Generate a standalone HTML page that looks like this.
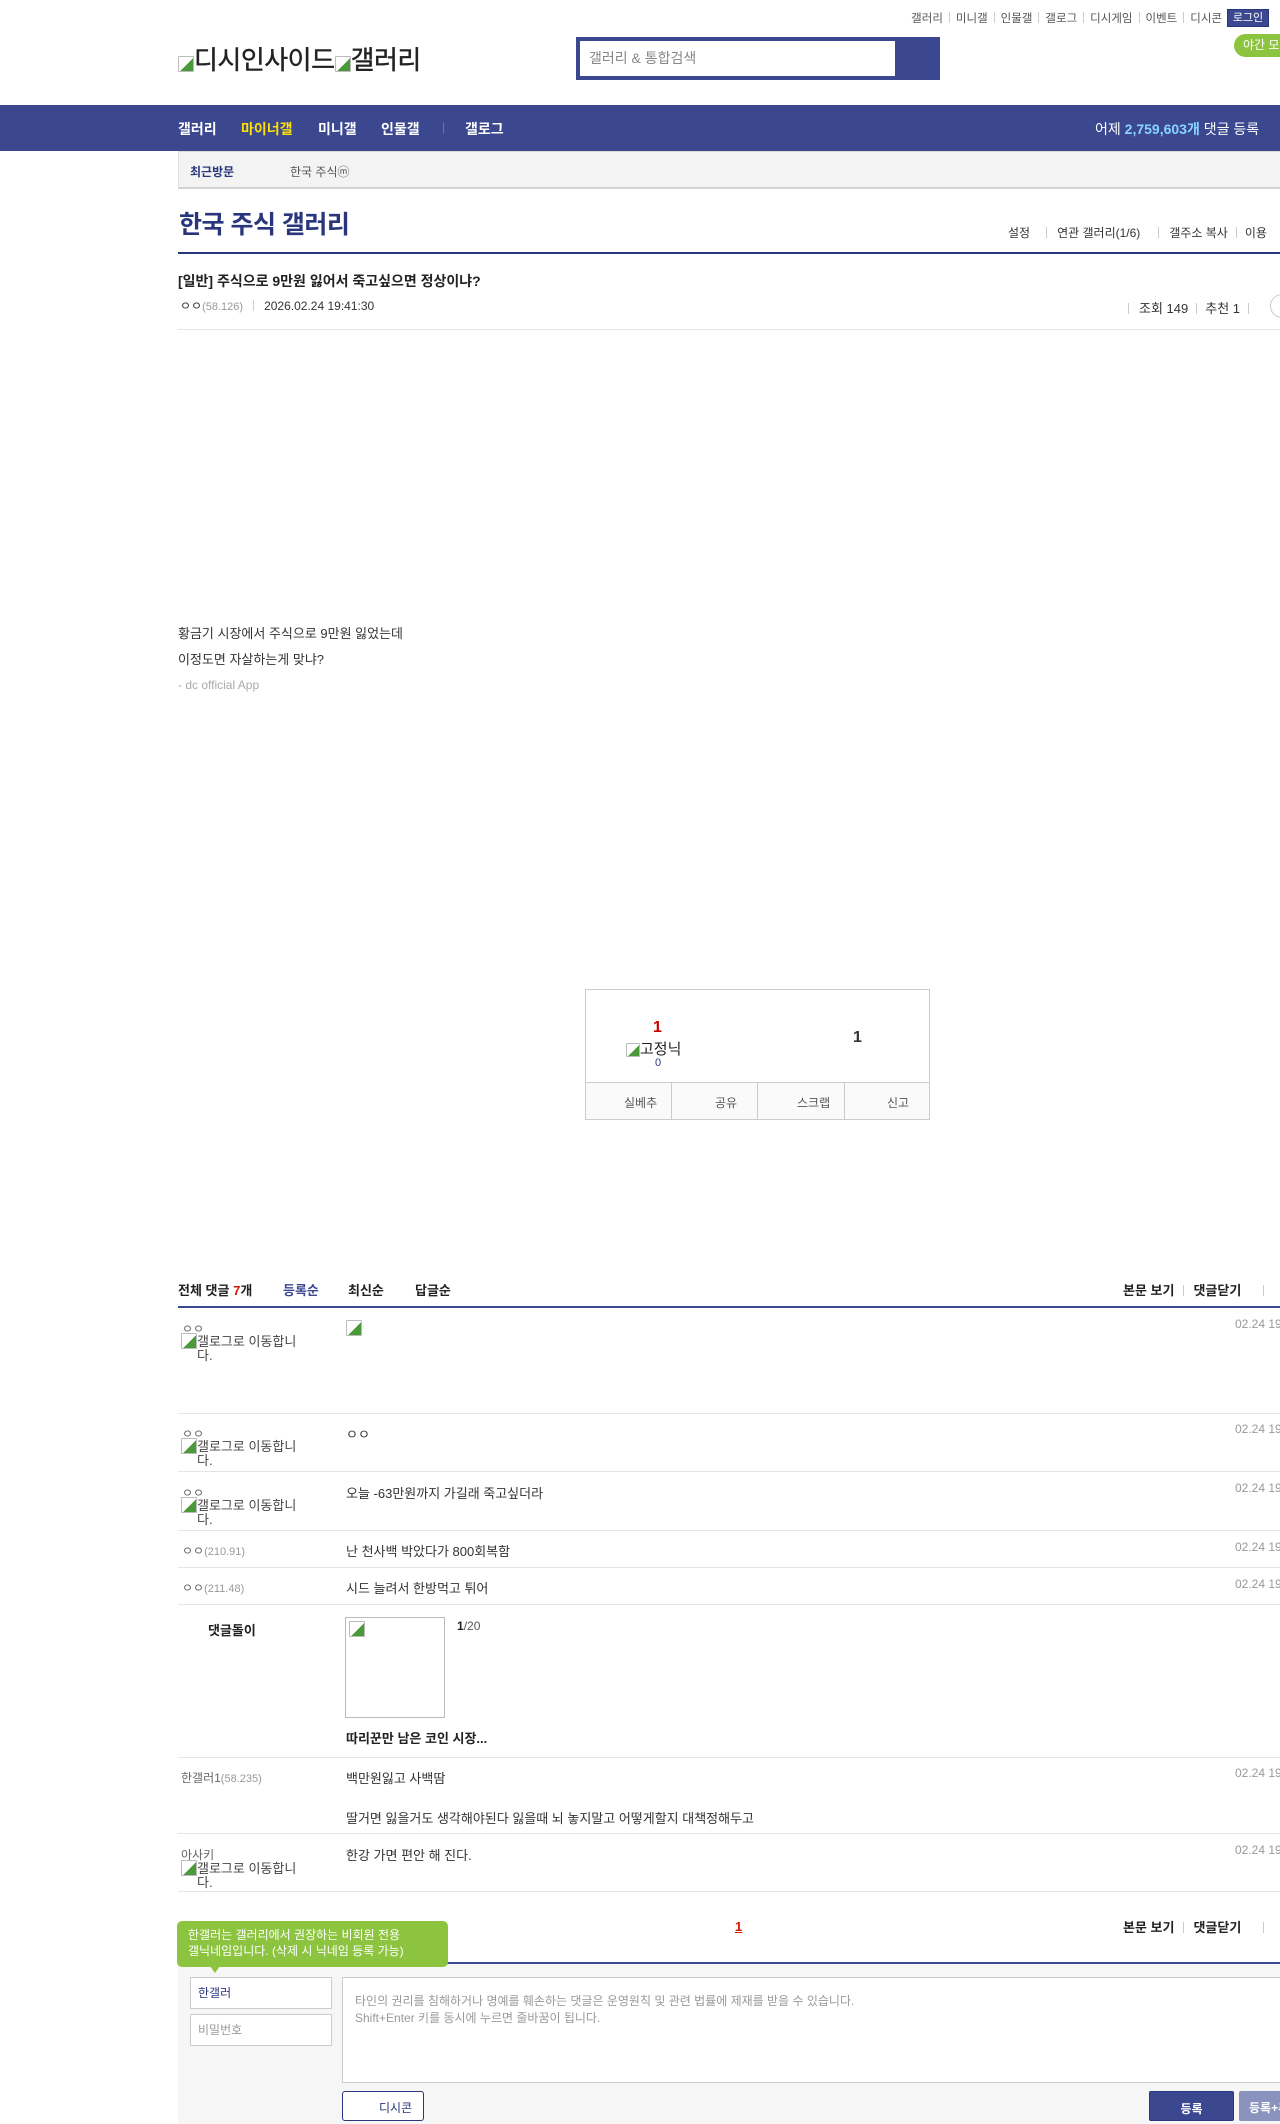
<!DOCTYPE html>
<html><head><meta charset="utf-8">
<style>
*{margin:0;padding:0;box-sizing:border-box}
body{width:1280px;height:2113px;overflow:hidden;background:#fff;font-family:"Liberation Sans","Noto Sans CJK KR",sans-serif;color:#333;font-size:13px;position:relative}
.a{position:absolute;white-space:nowrap}
.navy{color:#29367c}
.sep{display:inline-block;width:1px;height:11px;background:#ccc;margin:0 6px;vertical-align:-1px}
.bi{display:inline-block;width:16px;height:16px;border:1px solid #bbb;border-radius:1px;vertical-align:-3px;background:linear-gradient(135deg,#fff 55%,#4a9a3a 55%)}
.line{position:absolute;left:178px;right:0;height:1px;background:#e5e5e5}
.gray{color:#999}
</style></head><body>

<div class="a" style="right:58px;top:10px;font-size:11.5px;color:#555">갤러리<span class="sep"></span>미니갤<span class="sep"></span>인물갤<span class="sep"></span>갤로그<span class="sep"></span>디시게임<span class="sep"></span>이벤트<span class="sep"></span>디시콘</div>
<div class="a" style="left:1227px;top:9px;width:42px;height:18px;background:#3b4890;border:1px solid #29367c;color:#fff;font-size:11px;line-height:16px;text-align:center">로그인</div>
<div class="a" style="left:1234px;top:34px;width:70px;height:23px;background:#8cc43f;border-radius:12px;color:#fff;font-size:12px;line-height:23px;padding-left:9px">야간 모드</div>

<div class="a" style="left:178px;top:40px;font-size:26px;color:#222;letter-spacing:-0.5px;-webkit-text-stroke:0.4px #222"><span class="bi"></span>디시인사이드<span class="bi"></span>갤러리</div>

<div class="a" style="left:576px;top:37px;width:364px;height:43px;background:#3b4890"></div>
<div class="a" style="left:580px;top:41px;width:315px;height:35px;background:#fff;color:#888;font-size:14px;line-height:35px;padding-left:9px">갤러리 &amp; 통합검색</div>

<div class="a" style="left:0;top:105px;width:1280px;height:46px;background:#3b4890"></div>
<div class="a" style="left:178px;top:119px;font-size:14px;font-weight:bold;color:#fff">갤러리</div>
<div class="a" style="left:241px;top:119px;font-size:14px;font-weight:bold;color:#ffe100">마이너갤</div>
<div class="a" style="left:318px;top:119px;font-size:14px;font-weight:bold;color:#fff">미니갤</div>
<div class="a" style="left:381px;top:119px;font-size:14px;font-weight:bold;color:#fff">인물갤</div>
<div class="a" style="left:443px;top:122px;width:1px;height:12px;background:#6a74b0"></div>
<div class="a" style="left:465px;top:119px;font-size:14px;font-weight:bold;color:#fff">갤로그</div>
<div class="a" style="left:1095px;top:119px;font-size:14px;color:#fff">어제 <b style="color:#88d4ff">2,759,603개</b> 댓글 등록</div>

<div class="a" style="left:178px;top:151px;width:1110px;height:38px;background:#f3f3f3;border:1px solid #ddd;border-bottom:2px solid #d3d3d3"></div>
<div class="a navy" style="left:190px;top:163px;font-size:12px;font-weight:bold">최근방문</div>
<div class="a" style="left:290px;top:163px;font-size:12px;color:#555">한국 주식ⓜ</div>

<div class="a navy" style="left:179px;top:205px;font-size:25px;font-weight:bold;letter-spacing:-0.5px">한국 주식 갤러리</div>
<div class="a" style="left:1008px;top:224px;font-size:12px;color:#333">설정<span class="sep" style="margin:0 10px 0 16px"></span>연관 갤러리(1/6)<span class="sep" style="margin:0 10px 0 18px"></span>갤주소 복사<span class="sep" style="margin:0 8px"></span>이용</div>
<div class="a" style="left:178px;top:252px;width:1110px;height:2px;background:#29367c"></div>

<div class="a" style="left:178px;top:271px;font-size:14px;font-weight:bold;color:#222">[일반] 주식으로 9만원 잃어서 죽고싶으면 정상이냐?</div>
<div class="a" style="left:180px;top:297px;font-size:12px;color:#333">ㅇㅇ<span class="gray" style="font-size:11px">(58.126)</span><span class="sep" style="margin:0 10px"></span>2026.02.24 19:41:30</div>
<div class="a" style="left:1128px;top:298px;font-size:13px;color:#333"><span class="sep" style="margin:0 10px 0 0"></span>조회 149<span class="sep" style="margin:0 8px"></span>추천 1<span class="sep" style="margin:0 8px"></span></div>
<div class="a" style="left:1270px;top:294px;width:24px;height:24px;border:1px solid #ccc;border-radius:12px"></div>
<div class="line" style="top:329px"></div>

<div class="a" style="left:178px;top:623px;font-size:13px;color:#333">황금기 시장에서 주식으로 9만원 잃었는데</div>
<div class="a" style="left:178px;top:649px;font-size:13px;color:#333">이정도면 자살하는게 맞냐?</div>
<div class="a" style="left:178px;top:678px;font-size:12px;color:#aaa">- dc official App</div>

<div class="a" style="left:585px;top:989px;width:345px;height:131px;border:1px solid #ccc"></div>
<div class="a" style="left:585px;top:1082px;width:345px;height:38px;background:#fafafa;border:1px solid #ccc"></div>
<div class="a" style="left:671px;top:1082px;width:1px;height:38px;background:#ccc"></div>
<div class="a" style="left:757px;top:1082px;width:1px;height:38px;background:#ccc"></div>
<div class="a" style="left:844px;top:1082px;width:1px;height:38px;background:#ccc"></div>
<div class="a" style="left:624px;top:1094px;font-size:12px;color:#555">실베추</div>
<div class="a" style="left:715px;top:1094px;font-size:12px;color:#555">공유</div>
<div class="a" style="left:797px;top:1094px;font-size:12px;color:#555">스크랩</div>
<div class="a" style="left:887px;top:1094px;font-size:12px;color:#555">신고</div>
<div class="a" style="left:653px;top:1019px;font-size:16px;font-weight:bold;color:#c00">1</div>
<div class="a" style="left:626px;top:1038px;font-size:15px;color:#222"><span class="bi" style="width:14px;height:14px"></span>고정닉</div>
<div class="a" style="left:655px;top:1057px;font-size:11px;color:#29367c">0</div>
<div class="a" style="left:853px;top:1029px;font-size:16px;font-weight:bold;color:#333">1</div>

<div class="a" style="left:178px;top:1280px;font-size:13px;font-weight:bold;color:#222">전체 댓글 <span style="color:#d31900">7</span>개</div>
<div class="a" style="left:283px;top:1280px;font-size:13px;font-weight:bold;color:#3b4890">등록순</div>
<div class="a" style="left:348px;top:1280px;font-size:13px;font-weight:bold;color:#222">최신순</div>
<div class="a" style="left:415px;top:1280px;font-size:13px;font-weight:bold;color:#222">답글순</div>
<div class="a" style="left:1123px;top:1280px;font-size:13px;font-weight:bold;color:#222">본문 보기<span class="sep" style="margin:0 9px"></span>댓글닫기<span class="sep" style="margin:0 0 0 22px"></span></div>
<div class="a" style="left:178px;top:1306px;width:1110px;height:2px;background:#3b4890"></div>

<div class="a gray" style="left:182px;top:1320px;font-size:12px;color:#666">ㅇㅇ</div>
<div class="a" style="left:181px;top:1333px;font-size:13px;color:#444;line-height:13px"><span class="bi"></span>갤로그로 이동합니<br><span style="padding-left:16px">다.</span></div>
<div class="a" style="left:346px;top:1320px;font-size:11px;color:#666"><span class="bi"></span></div>
<div class="a gray" style="left:1235px;top:1317px;font-size:12px">02.24 19</div>
<div class="line" style="top:1413px"></div>

<div class="a" style="left:182px;top:1425px;font-size:12px;color:#666">ㅇㅇ</div>
<div class="a" style="left:181px;top:1438px;font-size:13px;color:#444;line-height:13px"><span class="bi"></span>갤로그로 이동합니<br><span style="padding-left:16px">다.</span></div>
<div class="a" style="left:346px;top:1424px;font-size:13px;color:#333">ㅇㅇ</div>
<div class="a gray" style="left:1235px;top:1422px;font-size:12px">02.24 19</div>
<div class="line" style="top:1471px"></div>

<div class="a" style="left:182px;top:1484px;font-size:12px;color:#666">ㅇㅇ</div>
<div class="a" style="left:181px;top:1497px;font-size:13px;color:#444;line-height:13px"><span class="bi"></span>갤로그로 이동합니<br><span style="padding-left:16px">다.</span></div>
<div class="a" style="left:346px;top:1483px;font-size:13px;color:#333">오늘 -63만원까지 가길래 죽고싶더라</div>
<div class="a gray" style="left:1235px;top:1481px;font-size:12px">02.24 19</div>
<div class="line" style="top:1530px"></div>

<div class="a" style="left:182px;top:1542px;font-size:12px;color:#666">ㅇㅇ<span class="gray" style="font-size:11px">(210.91)</span></div>
<div class="a" style="left:346px;top:1541px;font-size:13px;color:#333">난 천사백 박았다가 800회복함</div>
<div class="a gray" style="left:1235px;top:1540px;font-size:12px">02.24 19</div>
<div class="line" style="top:1567px"></div>

<div class="a" style="left:182px;top:1579px;font-size:12px;color:#666">ㅇㅇ<span class="gray" style="font-size:11px">(211.48)</span></div>
<div class="a" style="left:346px;top:1578px;font-size:13px;color:#333">시드 늘려서 한방먹고 튀어</div>
<div class="a gray" style="left:1235px;top:1577px;font-size:12px">02.24 19</div>
<div class="line" style="top:1604px"></div>

<div class="a" style="left:208px;top:1620px;font-size:13px;font-weight:bold;color:#222">댓글돌이</div>
<div class="a" style="left:345px;top:1617px;width:100px;height:101px;border:1px solid #bbb"><span class="bi" style="margin:3px"></span></div>
<div class="a" style="left:457px;top:1619px;font-size:12px;color:#555"><b style="color:#222">1</b>/20</div>
<div class="a" style="left:346px;top:1728px;font-size:13px;font-weight:bold;color:#222">따리꾼만 남은 코인 시장...</div>
<div class="line" style="top:1757px"></div>

<div class="a" style="left:181px;top:1769px;font-size:12px;color:#666">한갤러1<span class="gray" style="font-size:11px">(58.235)</span></div>
<div class="a" style="left:346px;top:1768px;font-size:13px;color:#333">백만원잃고 사백땀</div>
<div class="a" style="left:346px;top:1808px;font-size:13px;color:#333">딸거면 잃을거도 생각해야된다 잃을때 뇌 놓지말고 어떻게할지 대책정해두고</div>
<div class="a gray" style="left:1235px;top:1766px;font-size:12px">02.24 19</div>
<div class="line" style="top:1833px"></div>

<div class="a" style="left:181px;top:1846px;font-size:12px;color:#666">아사키</div>
<div class="a" style="left:181px;top:1860px;font-size:13px;color:#444;line-height:13px"><span class="bi"></span>갤로그로 이동합니<br><span style="padding-left:16px">다.</span></div>
<div class="a" style="left:346px;top:1845px;font-size:13px;color:#333">한강 가면 편안 해 진다.</div>
<div class="a gray" style="left:1235px;top:1843px;font-size:12px">02.24 19</div>
<div class="line" style="top:1891px"></div>

<div class="a" style="left:735px;top:1919px;font-size:13px;font-weight:bold;color:#d31900;text-decoration:underline">1</div>
<div class="a" style="left:1123px;top:1917px;font-size:13px;font-weight:bold;color:#222">본문 보기<span class="sep" style="margin:0 9px"></span>댓글닫기<span class="sep" style="margin:0 0 0 22px"></span></div>
<div class="a" style="left:178px;top:1962px;width:1110px;height:2px;background:#3b4890"></div>
<div class="a" style="left:178px;top:1964px;width:1110px;height:160px;background:#f6f6f6"></div>
<div class="a" style="left:177px;top:1921px;width:271px;height:46px;background:#8cc43f;border-radius:5px;color:#fff;font-size:12px;line-height:16px;padding:6px 0 0 11px">한갤러는 갤러리에서 권장하는 비회원 전용<br>갤닉네임입니다. (삭제 시 닉네임 등록 가능)</div>
<div class="a" style="left:210px;top:1966px;width:0;height:0;border-left:5px solid transparent;border-right:5px solid transparent;border-top:7px solid #8cc43f"></div>
<div class="a" style="left:190px;top:1977px;width:142px;height:32px;background:#fff;border:1px solid #ccc;font-size:12px;color:#29367c;line-height:30px;padding-left:7px">한갤러</div>
<div class="a" style="left:190px;top:2014px;width:142px;height:32px;background:#fff;border:1px solid #ccc;font-size:12px;color:#999;line-height:30px;padding-left:7px">비밀번호</div>
<div class="a" style="left:342px;top:1977px;width:960px;height:106px;background:#fff;border:1px solid #ccc;font-size:12px;color:#999;line-height:17px;padding:15px 0 0 12px">타인의 권리를 침해하거나 명예를 훼손하는 댓글은 운영원칙 및 관련 법률에 제재를 받을 수 있습니다.<br>Shift+Enter 키를 동시에 누르면 줄바꿈이 됩니다.</div>
<div class="a" style="left:342px;top:2091px;width:82px;height:30px;background:#fff;border:1px solid #29367c;border-radius:3px;font-size:12px;color:#29367c;padding:7px 0 0 36px">디시콘</div>
<div class="a" style="left:1149px;top:2091px;width:85px;height:30px;background:#3b4890;border:1px solid #29367c;border-radius:2px;font-size:12px;color:#fff;text-align:center;padding-top:8px;font-weight:bold">등록</div>
<div class="a" style="left:1239px;top:2091px;width:85px;height:30px;background:#8a93bd;border-radius:2px;font-size:12px;color:#fff;padding:8px 0 0 10px;font-weight:bold">등록+추천</div>
</body></html>
